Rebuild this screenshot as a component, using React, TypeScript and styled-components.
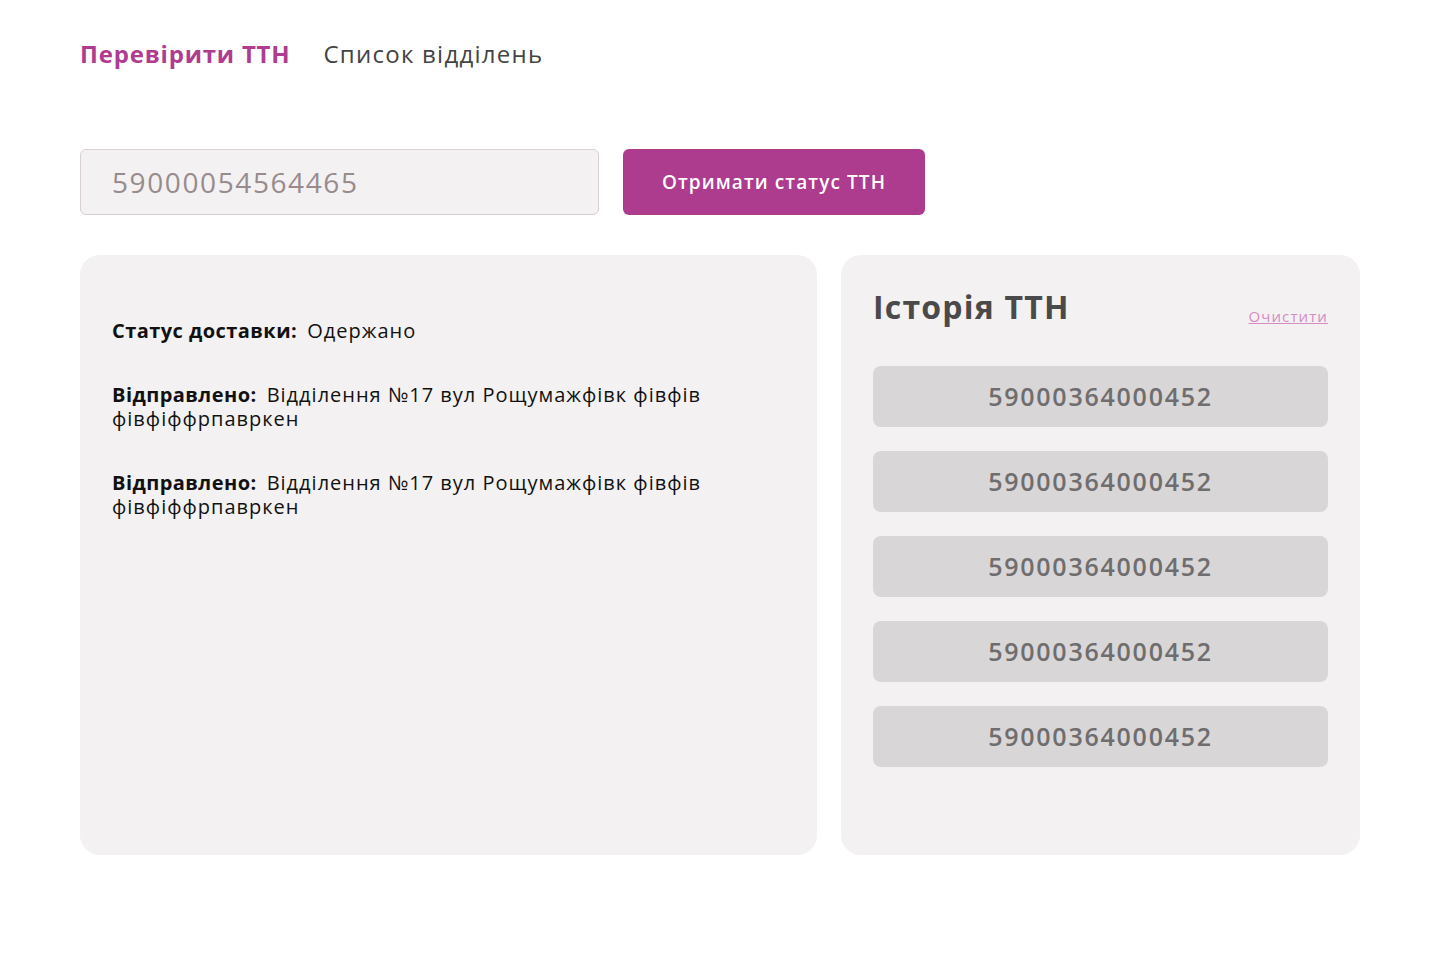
import React from "react";
import styled, { createGlobalStyle } from "styled-components";

const Global = createGlobalStyle`
  html, body { margin: 0; padding: 0; background: #ffffff; }
  body { font-family: "Open Sans", "Noto Sans", sans-serif; color: #111; }
  * { box-sizing: border-box; }
`;

const Page = styled.div`
  width: 1280px;
  margin: 0 0 0 80px;
  padding-top: 36px;
`;

const Nav = styled.nav`
  display: flex;
  align-items: center;
  gap: 33px;
  height: 36px;
`;

const NavLink = styled.a<{ $active?: boolean }>`
  font-size: 24px;
  line-height: 36px;
  font-weight: ${(p) => (p.$active ? 700 : 400)};
  letter-spacing: ${(p) => (p.$active ? "0.8px" : "1.25px")};
  color: ${(p) => (p.$active ? "#b03c8f" : "#444444")};
  text-decoration: none;
  cursor: pointer;
`;

const SearchRow = styled.div`
  display: flex;
  gap: 24px;
  margin-top: 77px;
`;

const Input = styled.input`
  width: 519px;
  height: 66px;
  border: 1px solid #d8cfd2;
  border-radius: 6px;
  background: #f3f1f2;
  padding: 0 31px;
  font-family: inherit;
  font-size: 28px;
  letter-spacing: 1.6px;
  color: #988b8d;
  outline: none;
`;

const Button = styled.button`
  width: 302px;
  height: 66px;
  border: none;
  border-radius: 6px;
  background: #ad3b8e;
  color: #ffffff;
  font-family: inherit;
  font-size: 19px;
  letter-spacing: 1.1px;
  font-weight: 600;
  cursor: pointer;
`;

const Cards = styled.div`
  display: flex;
  gap: 24px;
  margin-top: 40px;
`;

const Card = styled.section<{ $width: number }>`
  width: ${(p) => p.$width}px;
  height: 600px;
  background: #f3f1f2;
  border-radius: 20px;
`;

const StatusCard = styled(Card)`
  padding: 64px 32px 32px;
  display: flex;
  flex-direction: column;
  gap: 40px;
`;

const InfoLine = styled.p`
  margin: 0;
  font-size: 20px;
  line-height: 24px;
  letter-spacing: 1px;
  color: #111111;
  max-width: 660px;
`;

const Label = styled.b`
  font-weight: 700;
  letter-spacing: 0.45px;
  margin-right: 10px;
`;

const HistoryCard = styled(Card)`
  padding: 30px 32px 32px;
  display: flex;
  flex-direction: column;
`;

const HistoryHead = styled.div`
  display: flex;
  justify-content: space-between;
  align-items: flex-end;
  margin-bottom: 37px;
`;

const Title = styled.h2`
  margin: 0;
  font-size: 32px;
  line-height: 44px;
  font-weight: 700;
  letter-spacing: 1.2px;
  color: #4a4a4a;
`;

const ClearLink = styled.a`
  font-size: 15px;
  line-height: 20px;
  letter-spacing: 1.1px;
  color: #d48cc5;
  text-decoration: underline;
  margin-bottom: 3px;
  cursor: pointer;
`;

const HistoryList = styled.div`
  display: flex;
  flex-direction: column;
  gap: 24px;
`;

const HistoryItem = styled.div`
  height: 61px;
  border-radius: 8px;
  background: #d8d6d7;
  display: flex;
  align-items: center;
  justify-content: center;
  padding-bottom: 1px;
  font-size: 25px;
  letter-spacing: 1.75px;
  font-weight: 600;
  color: #6f6d6e;
`;

const history = Array.from({ length: 5 }, () => "59000364000452");

export default function App() {
  return (
    <>
      <Global />
      <Page>
        <Nav>
          <NavLink $active>Перевірити ТТН</NavLink>
          <NavLink>Список відділень</NavLink>
        </Nav>
        <SearchRow>
          <Input defaultValue="59000054564465" />
          <Button>Отримати статус ТТН</Button>
        </SearchRow>
        <Cards>
          <StatusCard $width={737}>
            <InfoLine>
              <Label>Статус доставки:</Label>Одержано
            </InfoLine>
            <InfoLine>
              <Label>Відправлено:</Label>Відділення №17 вул Рощумажфівк фівфів фівфіффрпавркен
            </InfoLine>
            <InfoLine>
              <Label>Відправлено:</Label>Відділення №17 вул Рощумажфівк фівфів фівфіффрпавркен
            </InfoLine>
          </StatusCard>
          <HistoryCard $width={519}>
            <HistoryHead>
              <Title>Історія ТТН</Title>
              <ClearLink>Очистити</ClearLink>
            </HistoryHead>
            <HistoryList>
              {history.map((h, i) => (
                <HistoryItem key={i}>{h}</HistoryItem>
              ))}
            </HistoryList>
          </HistoryCard>
        </Cards>
      </Page>
    </>
  );
}
